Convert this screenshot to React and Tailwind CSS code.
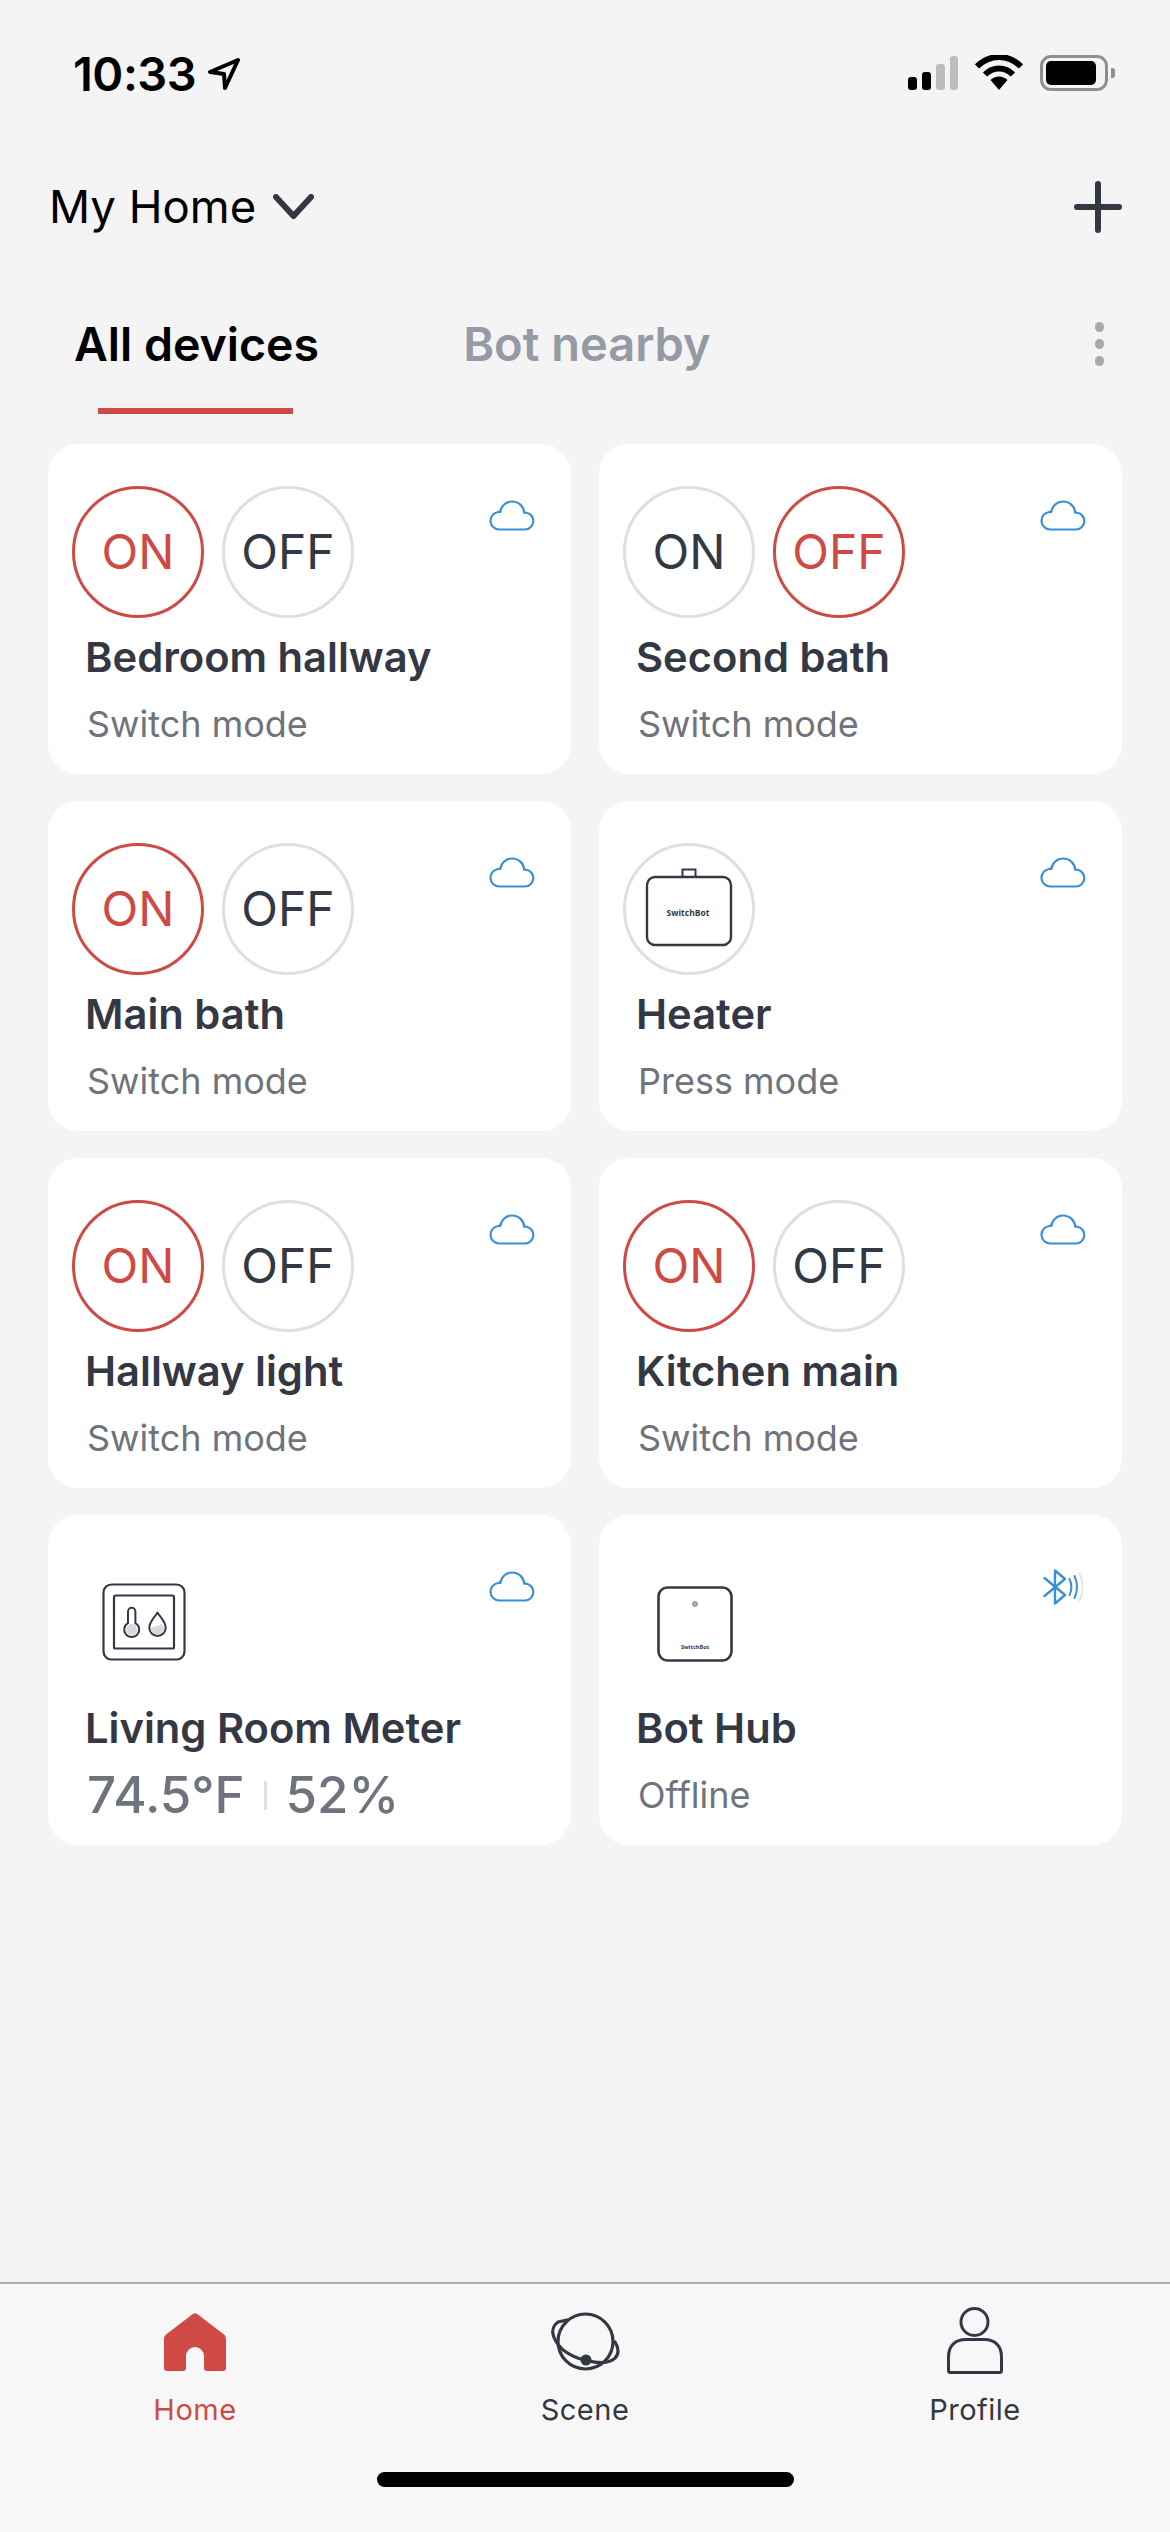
function CloudIcon() {
  return (
    <svg width="46" height="31" viewBox="0 0 46 31" fill="none" className="absolute right-[36px] top-[56px]">
      <path
        d="M10 29.500h26a8.500 8.500 0 0 0 1.600-16.800c-.7-.2-1.600-.2-2.400 0-.4-6-5.200-11.200-12.200-11.200-6 0-10.900 4.500-11.700 10.500-.8-.1-1.500-.1-2.300 0A8.800 8.800 0 0 0 10 29.500Z"
        stroke="#3b8fd4"
        strokeWidth="2.200"
        strokeLinejoin="round"
      />
    </svg>
  )
}

function BluetoothIcon() {
  return (
    <svg width="40" height="36" viewBox="0 0 40 36" fill="none" className="absolute right-[39px] top-[54px]">
      <path
        d="M1.500 9 22 26l-10 8.500V1.500L22 10 1.500 27"
        stroke="#3b8fd4"
        strokeWidth="2.400"
        strokeLinecap="round"
        strokeLinejoin="round"
      />
      <path d="M26.500 10c2.400 5 2.400 11 0 16" stroke="#3b8fd4" strokeWidth="2" strokeLinecap="round" />
      <path d="M31.500 7c3.200 7 3.200 15 0 22" stroke="#3b8fd4" strokeWidth="2" strokeLinecap="round" />
      <path d="M36.500 4.500c4 8.500 4 18.500 0 27" stroke="#e4e7ea" strokeWidth="2" strokeLinecap="round" />
    </svg>
  )
}

function BotIcon() {
  return (
    <svg width="88" height="80" viewBox="0 0 88 80" fill="none">
      <rect x="37.500" y="1.500" width="13" height="9" fill="none" stroke="#333844" strokeWidth="2" />
      <rect x="2" y="9" width="84" height="68" rx="8" fill="#fff" stroke="#333844" strokeWidth="2.400" />
      <text x="43" y="48" textAnchor="middle" fontSize="8.500" fontWeight="700" fill="#333844" fontFamily="Open Sans, sans-serif">
        SwitchBot
      </text>
    </svg>
  )
}

function MeterIcon() {
  return (
    <svg width="84" height="78" viewBox="0 0 84 78" fill="none">
      <rect x="1.500" y="1.500" width="81" height="75" rx="8" stroke="#333844" strokeWidth="2.200" />
      <rect x="12" y="12.500" width="60" height="53" rx="1.500" stroke="#333844" strokeWidth="2.200" />
      <path
        d="M26 28.500a3.700 3.700 0 0 1 7.400 0v11.600a7.500 7.500 0 1 1-7.400 0V28.500Z"
        fill="#fff"
        stroke="#333844"
        strokeWidth="2"
      />
      <circle cx="29.700" cy="46.500" r="5.500" fill="#d9dadd" />
      <path
        d="M55.500 29.500c2.600 4.500 8.200 9 8.200 15.200a8.200 8.200 0 0 1-16.400 0c0-6.200 5.600-10.700 8.200-15.200Z"
        fill="#fff"
        stroke="#333844"
        strokeWidth="2"
        strokeLinejoin="round"
      />
      <path d="M49 45a6.500 6.500 0 0 0 13 0c0-2-1-3.500-3-4-3 3-7 2-10 4Z" fill="#d9dadd" />
    </svg>
  )
}

function HubIcon() {
  return (
    <svg width="76" height="76" viewBox="0 0 76 76" fill="none">
      <rect x="1.500" y="1.500" width="73" height="73" rx="9" stroke="#333844" strokeWidth="2.600" />
      <circle cx="38" cy="18" r="2.500" fill="#aaadb3" stroke="#8b8e95" strokeWidth="1" />
      <text x="38" y="63" textAnchor="middle" fontSize="5.600" fontWeight="700" fill="#333844" fontFamily="Open Sans, sans-serif">
        SwitchBot
      </text>
    </svg>
  )
}

function RoundButton({ label, active }) {
  return (
    <div
      className={`flex h-[132px] w-[132px] items-center justify-center rounded-full border-[3px] text-[48px] ${
        active ? 'border-[#cf4a44] text-[#cf4a44]' : 'border-[#dedfe0] text-[#333844]'
      }`}
    >
      {label}
    </div>
  )
}

function DeviceCard({ name, sub, on, offActive, icon, bluetooth, meter }) {
  return (
    <div className="relative h-[330px] rounded-[30px] bg-white">
      {bluetooth ? <BluetoothIcon /> : <CloudIcon />}
      <div className="flex h-[188px] items-start gap-[18px] pl-[24px] pt-[42px]">
        {on !== undefined && (
          <>
            <RoundButton label="ON" active={on} />
            <RoundButton label="OFF" active={offActive} />
          </>
        )}
        {icon}
      </div>
      <div className="pl-[37px] text-[41.700px] leading-[50px] font-semibold text-[#333844]">{name}</div>
      {meter ? (
        <div className="mt-[12px] flex items-center pl-[39px] text-[51px] leading-[60px] font-medium text-[#6f737d]">
          <span>74.5°F</span>
          <span className="mx-[19px] h-[29px] w-[3px] bg-[#e0e0e0]" />
          <span>52%</span>
        </div>
      ) : (
        <div className="mt-[20px] pl-[39px] text-[36px] leading-[44px] text-[#6f737d]">{sub}</div>
      )}
    </div>
  )
}

function StatusBar() {
  return (
    <div className="flex h-[157px] items-start justify-between pl-[73px] pr-[55px] pt-[51px]">
      <div className="flex items-center gap-[12px]">
        <span className="text-[47px] leading-[46px] font-semibold tracking-[-0.5px] text-black">10:33</span>
        <svg width="32" height="32" viewBox="0 0 32 32" fill="none">
          <path d="M30 2 2 14l14 2 1 14L30 2Z" stroke="#000" strokeWidth="4" strokeLinejoin="round" />
        </svg>
      </div>
      <div className="mt-[4px] flex items-center gap-[17px]">
        <div className="flex items-end gap-[5px]">
          <div className="h-[13px] w-[9px] rounded-[3px] bg-black" />
          <div className="h-[18px] w-[9px] rounded-[3px] bg-black" />
          <div className="h-[26px] w-[9px] rounded-[3px] bg-[#bdbdbd]" />
          <div className="h-[34px] w-[8px] rounded-[3px] bg-[#bdbdbd]" />
        </div>
        <svg width="48" height="36" viewBox="0 0 48 36" fill="none">
          <path d="M2 11.500C8 5.500 15.500 2 24 2s16 3.500 22 9.500" stroke="#000" strokeWidth="6" strokeLinecap="butt" />
          <path d="M10 19.500c3.800-3.800 8.600-6 14-6s10.200 2.200 14 6" stroke="#000" strokeWidth="6" />
          <path d="M15.500 25c2.300-2.200 5.200-3.500 8.500-3.500s6.200 1.300 8.500 3.500L24 35l-8.500-10Z" fill="#000" />
        </svg>
        <div className="flex items-center gap-[3px]">
          <div className="flex h-[36px] w-[68px] items-center rounded-[11px] border-[3px] border-[#8f8f8f] p-[3px]">
            <div className="h-full w-[50px] rounded-[5px] bg-black" />
          </div>
          <div className="h-[10px] w-[4px] rounded-r-[3px] bg-[#8f8f8f]" />
        </div>
      </div>
    </div>
  )
}

function NavItem({ label, active, children }) {
  return (
    <div className="flex w-[390px] flex-col items-center">
      <div className="flex h-[70px] items-end">{children}</div>
      <div className={`mt-[16px] text-[29px] leading-[36px] tracking-[0.5px] ${active ? 'text-[#cf4a44]' : 'text-[#333844]'}`}>
        {label}
      </div>
    </div>
  )
}

export default function App() {
  return (
    <div className="flex h-[2532px] w-[1170px] flex-col overflow-hidden bg-[#f4f4f4] font-['Inter',sans-serif]">
      <StatusBar />

      <div className="flex h-[100px] items-center justify-between pl-[49px] pr-[48px]">
        <div className="flex items-center gap-[17px]">
          <span className="text-[45.500px] leading-[60px] text-black">My Home</span>
          <svg width="41" height="26" viewBox="0 0 41 26" fill="none">
            <path d="M3 3l17.500 19L38 3" stroke="#333844" strokeWidth="6" strokeLinecap="round" strokeLinejoin="round" />
          </svg>
        </div>
        <svg width="48" height="52" viewBox="0 0 48 52" fill="none">
          <path d="M24 3v46M3 26h42" stroke="#333844" strokeWidth="6" strokeLinecap="round" />
        </svg>
      </div>

      <div className="flex h-[142px] items-start justify-between pl-[74px] pr-[66px] pt-[57px]">
        <div className="flex items-center gap-[144px]">
          <div className="relative text-[46.500px] leading-[60px] font-semibold text-black">
            All devices
            <div className="absolute left-[24px] top-[94px] h-[6px] w-[195px] bg-[#cf4a44]" />
          </div>
          <div className="text-[47px] leading-[60px] font-semibold text-[#959aa4]">Bot nearby</div>
        </div>
        <div className="flex flex-col gap-[7px] pt-[8px]">
          <div className="h-[10px] w-[9px] rounded-full bg-[#a6a9af]" />
          <div className="h-[10px] w-[9px] rounded-full bg-[#a6a9af]" />
          <div className="h-[10px] w-[9px] rounded-full bg-[#a6a9af]" />
        </div>
      </div>

      <div className="grid grid-cols-2 gap-x-[28px] gap-y-[27px] px-[48px] pt-[45px]">
        <DeviceCard name="Bedroom hallway" sub="Switch mode" on={true} offActive={false} />
        <DeviceCard name="Second bath" sub="Switch mode" on={false} offActive={true} />
        <DeviceCard name="Main bath" sub="Switch mode" on={true} offActive={false} />
        <DeviceCard
          name="Heater"
          sub="Press mode"
          icon={
            <div className="flex h-[132px] w-[132px] items-start justify-center rounded-full border-[3px] border-[#dedfe0] pt-[22px]">
              <BotIcon />
            </div>
          }
        />
        <DeviceCard name="Hallway light" sub="Switch mode" on={true} offActive={false} />
        <DeviceCard name="Kitchen main" sub="Switch mode" on={true} offActive={false} />
        <DeviceCard
          name="Living Room Meter"
          meter
          icon={
            <div className="pl-[30px] pt-[26px]">
              <MeterIcon />
            </div>
          }
        />
        <DeviceCard
          name="Bot Hub"
          sub="Offline"
          bluetooth
          icon={
            <div className="pl-[34px] pt-[29px]">
              <HubIcon />
            </div>
          }
        />
      </div>

      <div className="flex-1" />

      <div className="h-[250px] border-t-2 border-[#adadad] bg-[#f7f7f7]">
        <div className="flex pt-[22px]">
          <NavItem label="Home" active>
            <svg width="62" height="58" viewBox="0 0 62 58" fill="none" className="mb-[5px]">
              <path
                d="M28.500 1.200Q31-.6 33.500 1.200L60 21.500Q62 23 62 26V55a3 3 0 0 1-3 3H43a3 3 0 0 1-3-3V43a9 9 0 0 0-18 0V55a3 3 0 0 1-3 3H3a3 3 0 0 1-3-3V26Q0 23 2 21.500Z"
                fill="#cf4a44"
              />
            </svg>
          </NavItem>
          <NavItem label="Scene">
            <svg width="70" height="62" viewBox="0 0 70 62" fill="none" className="mb-[3px]">
              <circle cx="35.500" cy="30.500" r="27.500" stroke="#333844" strokeWidth="3.200" />
              <path
                d="M17 9 8 11C4 14 2 19 3 23c1 6 5 11 10 16 7 5 15 9 22 10 8 2 15 4 22 2 6-1 11-5 11-11 0-3-1-6-3-9"
                stroke="#333844"
                strokeWidth="3.200"
                strokeLinecap="round"
                strokeLinejoin="round"
              />
              <circle cx="36" cy="49" r="5.500" fill="#333844" />
            </svg>
          </NavItem>
          <NavItem label="Profile">
            <svg width="60" height="68" viewBox="0 0 60 68" fill="none" className="mb-[1px]">
              <circle cx="29.500" cy="15" r="13.500" stroke="#333844" strokeWidth="3" />
              <path
                d="M3.500 63.500V50C3.500 39 10 32.500 21 32.500H39C50 32.500 56.500 39 56.500 50V63.500a2 2 0 0 1-2 2H5.500a2 2 0 0 1-2-2Z"
                stroke="#333844"
                strokeWidth="3"
                strokeLinejoin="round"
              />
            </svg>
          </NavItem>
        </div>
        <div className="mx-auto mt-[44px] h-[15px] w-[417px] rounded-full bg-black" />
      </div>
    </div>
  )
}
